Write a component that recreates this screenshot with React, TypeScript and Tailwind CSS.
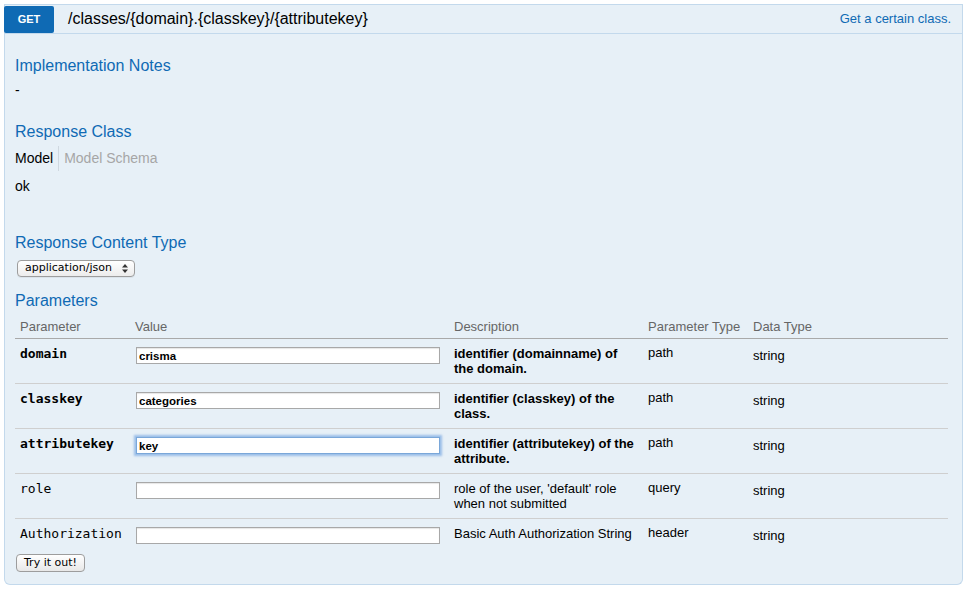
import React from 'react';

interface Param {
  name: string;
  value: string;
  description: string;
  paramType: string;
  dataType: string;
  required: boolean;
  focused?: boolean;
}

const params: Param[] = [
  { name: 'domain', value: 'crisma', description: 'identifier (domainname) of the domain.', paramType: 'path', dataType: 'string', required: true },
  { name: 'classkey', value: 'categories', description: 'identifier (classkey) of the class.', paramType: 'path', dataType: 'string', required: true },
  { name: 'attributekey', value: 'key', description: 'identifier (attributekey) of the attribute.', paramType: 'path', dataType: 'string', required: true, focused: true },
  { name: 'role', value: '', description: "role of the user, 'default' role when not submitted", paramType: 'query', dataType: 'string', required: false },
  { name: 'Authorization', value: '', description: 'Basic Auth Authorization String', paramType: 'header', dataType: 'string', required: false },
];

function Heading({ children, className = '' }: { children: React.ReactNode; className?: string }) {
  return <h4 className={`text-[16px] leading-[20px] text-[#0f6ab4] ${className}`}>{children}</h4>;
}

export default function App() {
  return (
    <div className="w-[967px] h-[589px] bg-white pt-[4px] pl-[4px] font-['Liberation_Sans',Arial,sans-serif] text-black">
      <div className="w-[959px]">
        {/* Header */}
        <div className="flex items-center h-[30px] bg-[#e7f0f7] border border-[#c3d9ec]">
          <span className="h-[27px] w-[50px] -ml-px bg-[#0f6ab4] text-white text-[11px] font-bold flex items-center justify-center rounded-[2px]">
            GET
          </span>
          <span className="ml-[14px] text-[16px]">/classes/{'{domain}'}.{'{classkey}'}/{'{attributekey}'}</span>
          <span className="ml-auto mr-[11px] text-[13px] text-[#0f6ab4]">Get a certain class.</span>
        </div>

        {/* Content */}
        <div className="bg-[#e7f0f7] border-x border-b border-[#c3d9ec] rounded-b-[6px] px-[10px] pt-[22px] pb-[11px]">
          <Heading>Implementation Notes</Heading>
          <p className="mt-[5px] text-[14px] leading-[18px]">-</p>

          <Heading className="mt-[23px]">Response Class</Heading>
          <div className="mt-[4px] flex items-center h-[25px] text-[14px]">
            <span>Model</span>
            <span className="ml-[5px] pl-[5px] h-full flex items-center border-l border-[#cfd8e0] text-[#a6a6a6]">Model Schema</span>
          </div>
          <p className="mt-[6px] text-[14px] leading-[18px]">ok</p>

          <Heading className="mt-[38px]">Response Content Type</Heading>
          <div className="mt-[7px] ml-[2px] w-[118px] h-[17px] flex items-center justify-between pl-[7px] pr-[6px] rounded-[4px] border border-[#9d9d9d] bg-gradient-to-b from-white to-[#ececec] shadow-[0_1px_0_rgba(0,0,0,0.05)] font-['DejaVu_Sans',sans-serif] text-[11px]">
            <span>application/json</span>
            <svg width="6" height="9" viewBox="0 0 6 9">
              <path d="M3 0 L6 3.5 L0 3.5 Z" fill="#333" />
              <path d="M3 9 L6 5.5 L0 5.5 Z" fill="#333" />
            </svg>
          </div>

          <Heading className="mt-[14px]">Parameters</Heading>
          <table className="mt-[3px] w-[933px] table-fixed border-collapse text-[13px] leading-[15px]">
            <colgroup>
              <col className="w-[115px]" />
              <col className="w-[319px]" />
              <col className="w-[194px]" />
              <col className="w-[105px]" />
              <col className="w-[200px]" />
            </colgroup>
            <thead>
              <tr className="border-b border-[#a9a9a9] text-[#666] text-left">
                <th className="font-normal pl-[5px] pt-[5px] pb-[4px]">Parameter</th>
                <th className="font-normal pl-[5px] pt-[5px] pb-[4px]">Value</th>
                <th className="font-normal pl-[5px] pt-[5px] pb-[4px]">Description</th>
                <th className="font-normal pl-[5px] pt-[5px] pb-[4px]">Parameter Type</th>
                <th className="font-normal pl-[5px] pt-[5px] pb-[4px]">Data Type</th>
              </tr>
            </thead>
            <tbody>
              {params.map((p, i) => (
                <tr
                  key={p.name}
                  className={i < params.length - 1 ? 'h-[45px] border-b border-[#cfcfcf] align-top' : 'h-[30px] align-top'}
                >
                  <td className={`pl-[5px] pt-[7px] font-['DejaVu_Sans_Mono',monospace] ${p.required ? 'font-bold' : ''}`}>
                    {p.name}
                  </td>
                  <td className="pl-[6px] pt-[8px]">
                    <input
                      type="text"
                      defaultValue={p.value}
                      className={`block w-[304px] h-[17px] px-[2px] bg-white font-['Liberation_Sans',Arial,sans-serif] font-bold text-[11.5px] outline-none ${
                        p.focused
                          ? 'border border-[#7aa7d9] shadow-[0_0_2px_2px_rgba(93,150,220,0.55)]'
                          : 'border border-[#a8a8a8] shadow-[inset_0_1px_1px_rgba(0,0,0,0.1)]'
                      }`}
                    />
                  </td>
                  <td className={`pl-[5px] pr-[7px] pt-[7px] ${p.required ? 'font-bold' : ''}`}>{p.description}</td>
                  <td className="pl-[5px] pt-[6px]">{p.paramType}</td>
                  <td className="pl-[5px] pt-[9px]">{p.dataType}</td>
                </tr>
              ))}
            </tbody>
          </table>

          <button
            type="button"
            className="mt-[5px] ml-[1px] h-[18px] px-[7px] rounded-[4px] border border-[#9d9d9d] bg-gradient-to-b from-white to-[#e8e8e8] font-['DejaVu_Sans',sans-serif] text-[11px] leading-[16px]"
          >
            Try it out!
          </button>
        </div>
      </div>
    </div>
  );
}
